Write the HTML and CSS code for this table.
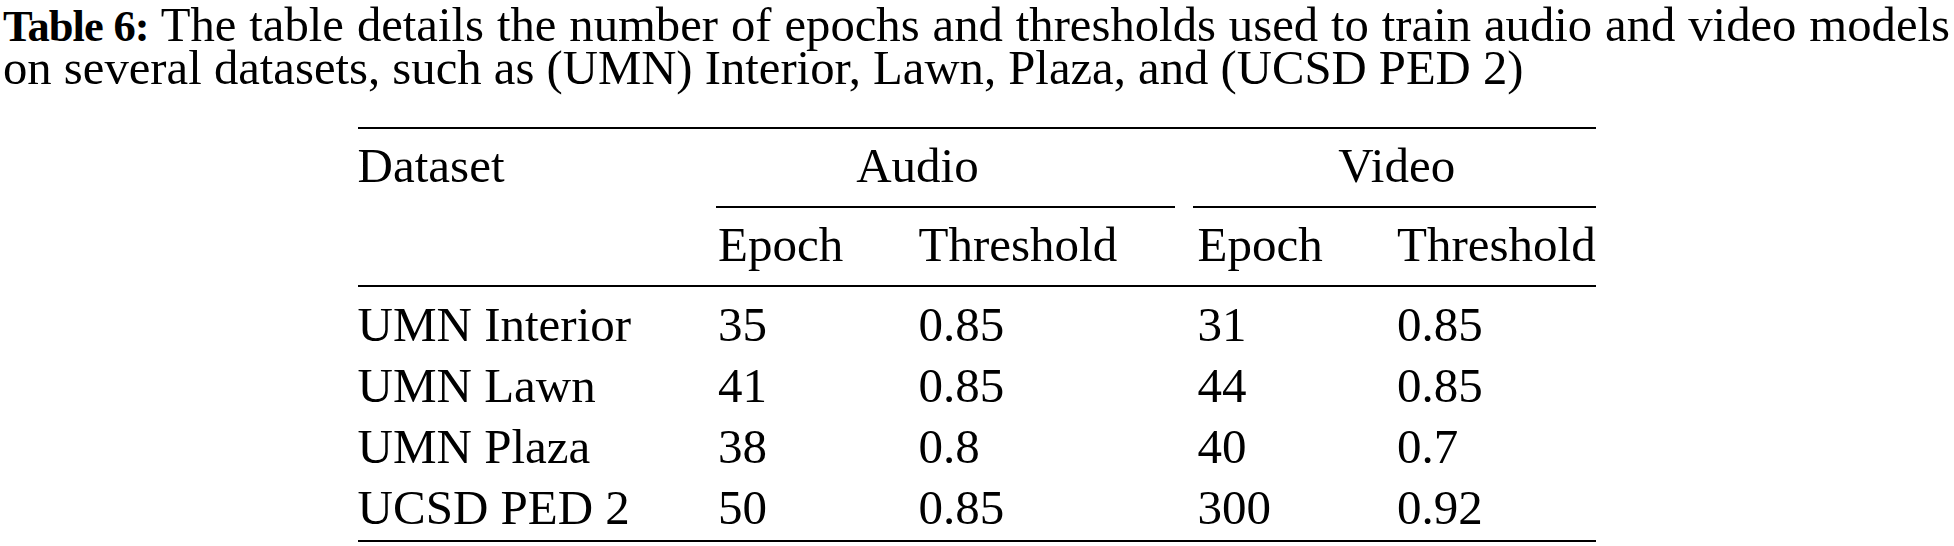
FILE: index.html
```html
<!DOCTYPE html>
<html lang="en">
<head>
<meta charset="utf-8">
<title>Table 6</title>
<link rel="stylesheet" href="styles.css">
</head>
<body>
<div class="sheet">
  <p class="caption">
    <span class="cap-line first"><b class="label">Table 6:</b> The table details the number of epochs and thresholds used to train audio and video models</span>
    <span class="cap-line">on several datasets, such as (UMN) Interior, Lawn, Plaza, and (UCSD PED 2)</span>
  </p>
  <div class="table">
    <div class="rule"></div>
    <div class="row head1">
      <div class="cell">Dataset</div>
      <div class="cell group audio">Audio</div>
      <div class="cell group video">Video</div>
    </div>
    <div class="row cmid">
      <div class="cmidrule audio-rule"></div>
      <div class="cmidrule video-rule"></div>
    </div>
    <div class="row head2">
      <div class="cell"></div>
      <div class="cell">Epoch</div>
      <div class="cell">Threshold</div>
      <div class="cell">Epoch</div>
      <div class="cell">Threshold</div>
    </div>
    <div class="rule mid"></div>
    <div class="body">
      <div class="row">
        <div class="cell">UMN Interior</div>
        <div class="cell">35</div>
        <div class="cell">0.85</div>
        <div class="cell">31</div>
        <div class="cell">0.85</div>
      </div>
      <div class="row">
        <div class="cell">UMN Lawn</div>
        <div class="cell">41</div>
        <div class="cell">0.85</div>
        <div class="cell">44</div>
        <div class="cell">0.85</div>
      </div>
      <div class="row">
        <div class="cell">UMN Plaza</div>
        <div class="cell">38</div>
        <div class="cell">0.8</div>
        <div class="cell">40</div>
        <div class="cell">0.7</div>
      </div>
      <div class="row">
        <div class="cell">UCSD PED 2</div>
        <div class="cell">50</div>
        <div class="cell">0.85</div>
        <div class="cell">300</div>
        <div class="cell">0.92</div>
      </div>
    </div>
    <div class="rule bottom"></div>
  </div>
</div>
</body>
</html>
```

FILE: styles.css
```css
html, body {
  margin: 0;
  padding: 0;
  background: #ffffff;
}

body {
  width: 1954px;
  height: 546px;
  overflow: hidden;
  color: #000000;
  font-family: "Liberation Serif", "Times New Roman", serif;
}

.sheet {
  width: 1954px;
}

.caption {
  margin: 0;
  padding-top: 3.5px;
  padding-left: 3px;
  width: 1947px;
  font-size: 48.7px;
  line-height: 43px;
}

.cap-line {
  display: block;
  height: 43px;
  white-space: nowrap;
}

.cap-line.first {
  text-align: justify;
  text-align-last: justify;
}

.label {
  font-weight: bold;
  font-size: 44.5px;
  letter-spacing: -1px;
}

.table {
  margin-top: 37.5px;
  margin-left: 357.6px;
  width: 1238.4px;
  font-size: 49px;
}

.rule {
  height: 2px;
  background: #000000;
}

.rule.mid {
  margin-top: 10px;
}

.rule.bottom {
  margin-top: 2px;
}

.row {
  display: grid;
  grid-template-columns: 360.4px 200.5px 279px 199.5px 199px;
  height: 61px;
  line-height: 61px;
  white-space: nowrap;
}

.head1 {
  margin-top: 6px;
}

.head2 {
  margin-top: 6px;
}

.row.cmid {
  height: 2px;
  margin-top: 10px;
}

.cmidrule {
  height: 2px;
  background: #000000;
}

.audio-rule {
  grid-column: 2 / 4;
  margin-left: -1.5px;
  margin-right: 22.5px;
}

.video-rule {
  grid-column: 4 / 6;
  margin-left: -4px;
}

.group {
  text-align: center;
}

.audio {
  grid-column: 2 / 4;
  padding-right: 80.5px;
}

.video {
  grid-column: 4 / 6;
}

.body {
  margin-top: 7px;
}
```
